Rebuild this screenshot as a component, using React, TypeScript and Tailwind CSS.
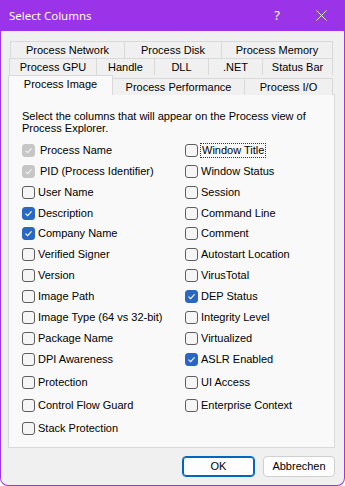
import React from "react";

type Item = { label: string; checked?: boolean; disabled?: boolean; focus?: boolean };

const LEFT: Item[] = [
  { label: "Process Name", checked: true, disabled: true },
  { label: "PID (Process Identifier)", checked: true, disabled: true },
  { label: "User Name" },
  { label: "Description", checked: true },
  { label: "Company Name", checked: true },
  { label: "Verified Signer" },
  { label: "Version" },
  { label: "Image Path" },
  { label: "Image Type (64 vs 32-bit)" },
  { label: "Package Name" },
  { label: "DPI Awareness" },
  { label: "Protection" },
  { label: "Control Flow Guard" },
  { label: "Stack Protection" },
];

const RIGHT: Item[] = [
  { label: "Window Title", focus: true },
  { label: "Window Status" },
  { label: "Session" },
  { label: "Command Line" },
  { label: "Comment" },
  { label: "Autostart Location" },
  { label: "VirusTotal" },
  { label: "DEP Status", checked: true },
  { label: "Integrity Level" },
  { label: "Virtualized" },
  { label: "ASLR Enabled", checked: true },
  { label: "UI Access" },
  { label: "Enterprise Context" },
];

// row heights follow the dialog's uneven spacing
const ROW_H = ["h-[21px]", "h-[21px]", "h-[21px]", "h-[20px]", "h-[21px]", "h-[21px]", "h-[21px]", "h-[21px]", "h-[21px]", "h-[20px]", "h-[23px]", "h-[23px]", "h-[23px]", "h-[23px]"];

const Check = ({ item }: { item: Item }) => {
  let box = "bg-[#f5f5f5] border border-[#5e5e5e]";
  if (item.checked && item.disabled) box = "bg-[#c6c6c6] border border-[#c6c6c6]";
  else if (item.checked) box = "bg-[#2a67c2] border border-[#2a67c2]";
  return (
    <span className={`w-[13px] h-[13px] rounded-[3px] flex items-center justify-center shrink-0 ${box}`}>
      {item.checked && (
        <svg width="9" height="9" viewBox="0 0 9 9">
          <path d="M1.5 4.7 L3.6 6.7 L7.6 2.3" fill="none" stroke={item.disabled ? "#f2f2f2" : "#ffffff"} strokeWidth="1.1" />
        </svg>
      )}
    </span>
  );
};

const Column = ({ items }: { items: Item[] }) => (
  <div className="flex flex-col">
    {items.map((it, i) => (
      <div key={it.label} className={`flex items-center ${ROW_H[i]}`}>
        <Check item={it} />
        <span
          className={`${it.disabled ? "ml-[5px]" : "ml-[3px]"} ${
            it.focus ? "outline outline-1 outline-dotted outline-[#333] px-[1px]" : ""
          } leading-[13px] text-[#000]`}
        >
          {it.label}
        </span>
      </div>
    ))}
  </div>
);

const Tab = ({ label, w, first }: { label: string; w: string; first?: boolean }) => (
  <div
    className={`${w} h-full flex items-center justify-center border-t border-r border-[#d9d9d9] bg-[#f0f0f0] ${
      first ? "border-l" : ""
    }`}
  >
    {label}
  </div>
);

export default function App() {
  return (
    <div
      className="w-[345px] h-[486px] flex flex-col bg-[#9b33e8] rounded-b-[8px] overflow-hidden text-[11px] text-black"
      style={{ fontFamily: '"Liberation Sans", Arial, sans-serif' }}
    >
      <div className="h-[31px] flex items-center pl-[9px] text-white shrink-0">
        <span className="text-[11.5px] font-['Noto_Sans',sans-serif]">Select Columns</span>
        <span className="ml-auto w-[12px] text-center text-[13px] font-['Noto_Sans',sans-serif]">?</span>
        <svg className="ml-[33px] mr-[18px]" width="11" height="11" viewBox="0 0 11 11">
          <path d="M0.5 0.5 L10.5 10.5 M10.5 0.5 L0.5 10.5" stroke="#fff" strokeWidth="1" />
        </svg>
      </div>

      <div className="flex-1 mx-[1px] mb-[1px] bg-[#f0f0f0] rounded-b-[7px] flex flex-col pl-[7px] pr-[9px] pt-[10px]">
        <div className="flex h-[17px] ml-[2px] mr-[2px]">
          <Tab label="Process Network" w="w-[115px]" first />
          <Tab label="Process Disk" w="w-[97px]" />
          <Tab label="Process Memory" w="w-[111px]" />
        </div>
        <div className="flex h-[17px] ml-[1px] mr-[2px]">
          <Tab label="Process GPU" w="w-[88px]" first />
          <Tab label="Handle" w="w-[58px]" />
          <Tab label="DLL" w="w-[54px]" />
          <Tab label=".NET" w="w-[54px]" />
          <Tab label="Status Bar" w="w-[70px]" />
        </div>
        <div className="flex h-[20px] items-end mr-[2px] relative z-10">
          <div className="w-[105px] h-[20px] flex items-center justify-center border border-b-0 border-[#d9d9d9] bg-[#f9f9f9] pb-[2px]">
            Process Image
          </div>
          <div className="w-[132px] h-[17px] flex items-center justify-center border-t border-r border-[#d9d9d9] bg-[#f0f0f0]">
            Process Performance
          </div>
          <div className="w-[88px] h-[17px] flex items-center justify-center border-t border-r border-[#d9d9d9] bg-[#f0f0f0]">
            Process I/O
          </div>
        </div>

        <div className="-mt-[1px] h-[354px] border border-[#d9d9d9] bg-[#f9f9f9] pl-[13px] pt-[15px]">
          <p className="leading-[12px] mb-[6px]">
            Select the columns that will appear on the Process view of
            <br />
            Process Explorer.
          </p>
          <div className="grid grid-cols-[163px_1fr]">
            <Column items={LEFT} />
            <Column items={RIGHT} />
          </div>
        </div>

        <div className="flex justify-end gap-[8px] mt-[8px]">
          <button className="w-[73px] h-[21px] rounded-[4px] border border-[#0067c0] bg-[#fdfdfd] shadow-[inset_0_0_0_1px_#0067c0] text-[11px]">
            OK
          </button>
          <button className="w-[72px] h-[21px] rounded-[4px] border border-[#d0d0d0] bg-[#fdfdfd] text-[11px]">
            Abbrechen
          </button>
        </div>
      </div>
    </div>
  );
}
